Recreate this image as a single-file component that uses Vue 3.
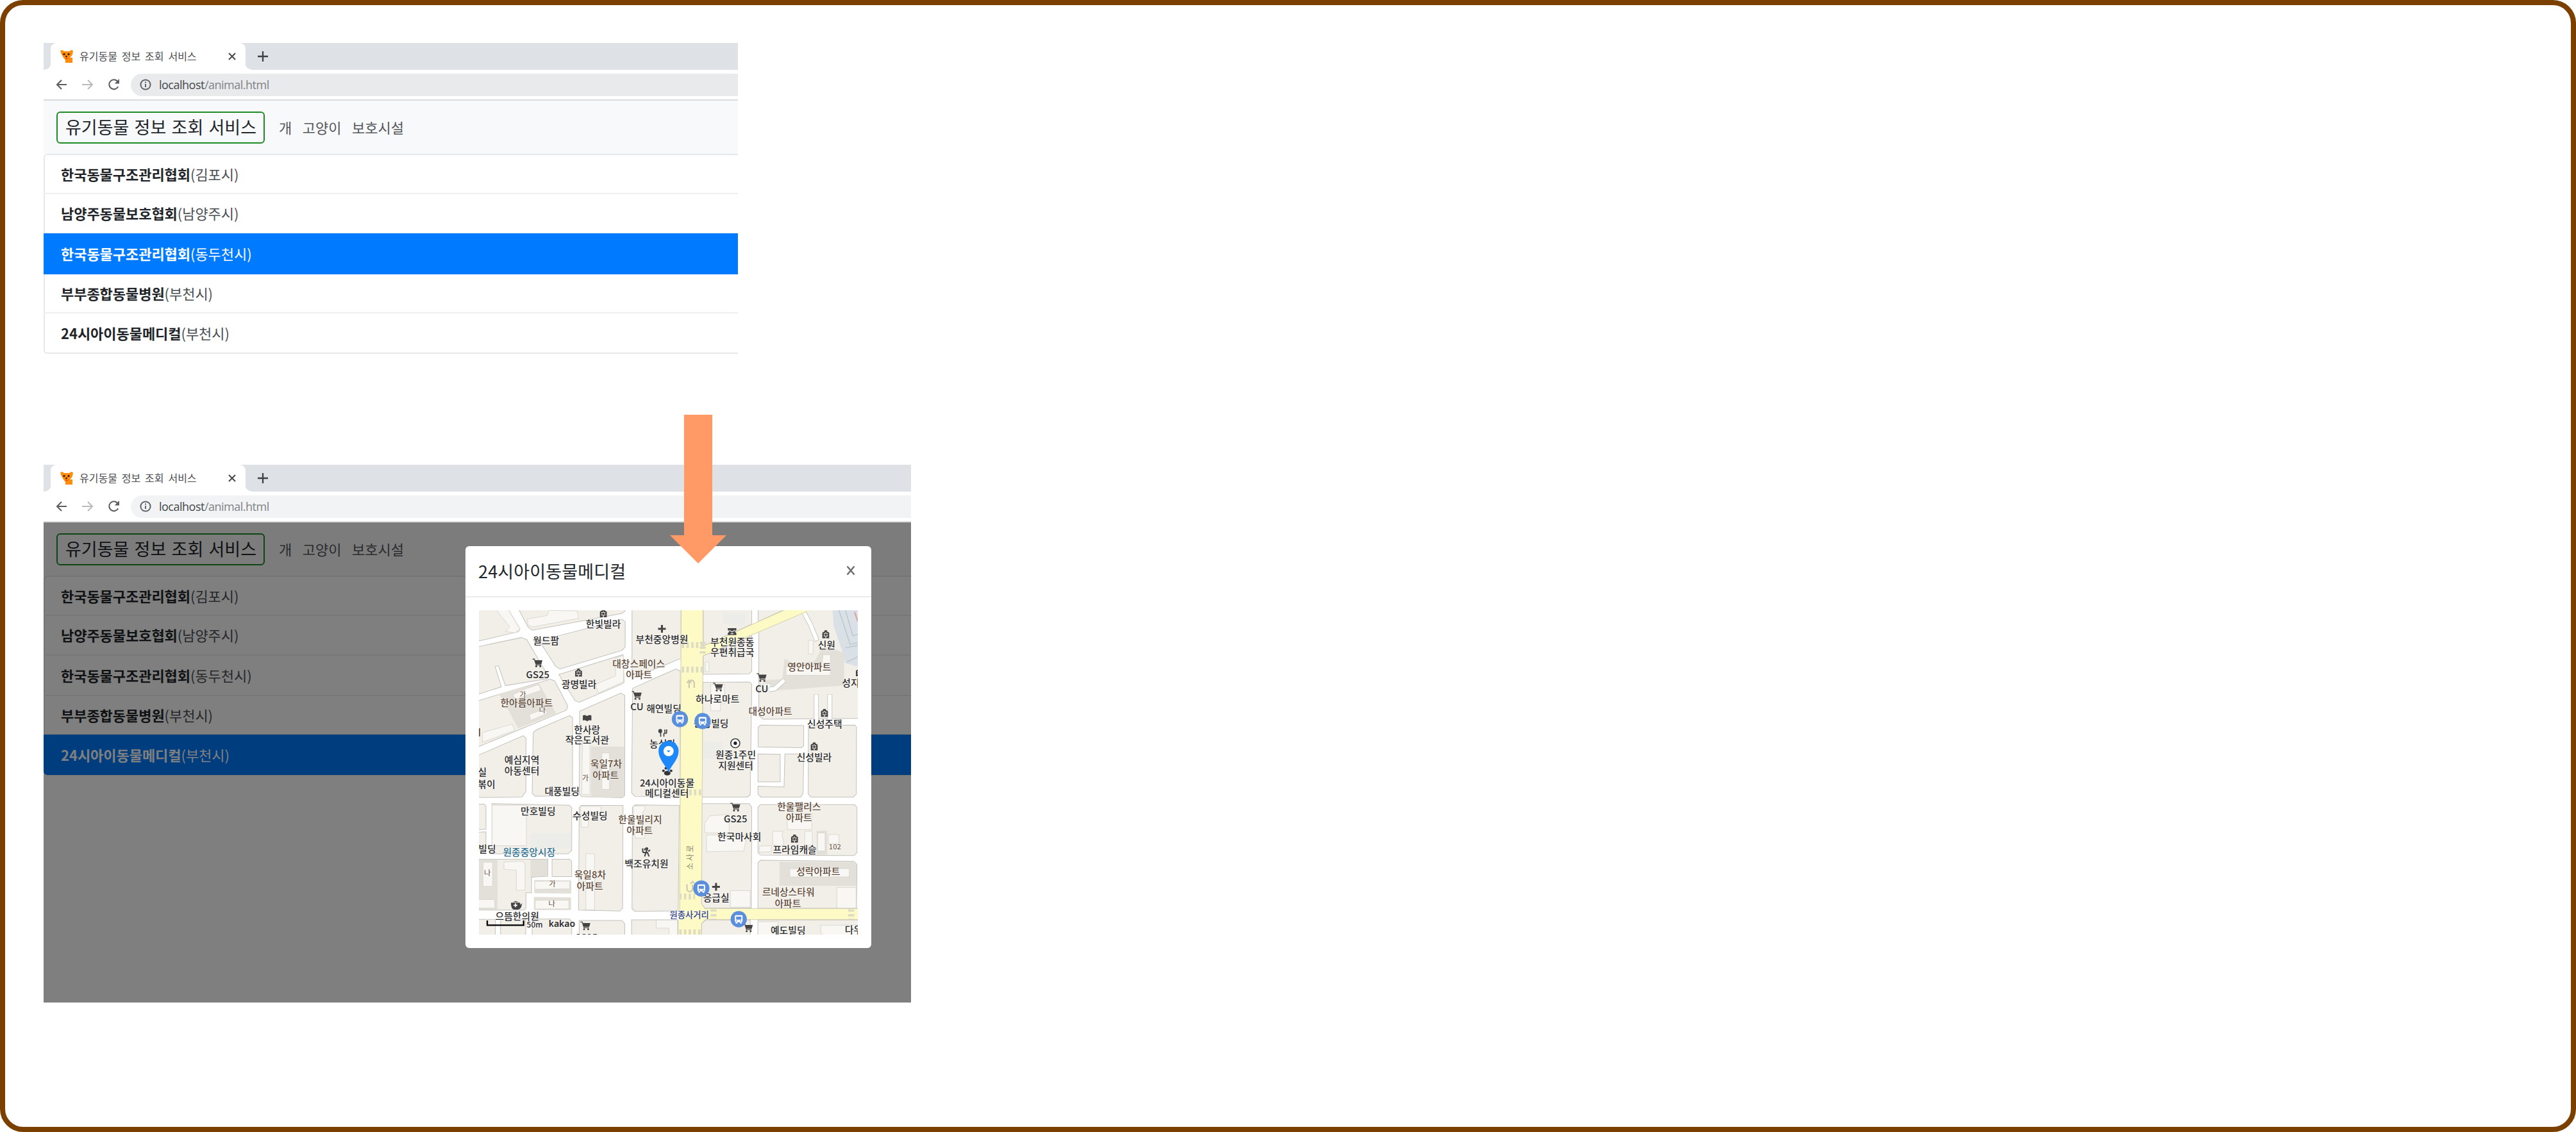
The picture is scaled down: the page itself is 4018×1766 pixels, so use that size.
<script setup>
const shelters = [
  { name: '한국동물구조관리협회', city: '김포시' },
  { name: '남양주동물보호협회', city: '남양주시' },
  { name: '한국동물구조관리협회', city: '동두천시' },
  { name: '부부종합동물병원', city: '부천시' },
  { name: '24시아이동물메디컬', city: '부천시' },
]
const shots = [
  { id: 'list', active: 2, modal: false },
  { id: 'detail', active: 4, modal: true },
]

// City blocks between the roads
const blocks = [
  '0,20 150,20 213,125 205,138 0,186',
  '200,20 710,20 705,40 690,52 270,131 250,115',
  '303,180 690,80 705,90 705,208 690,225 400,312 380,300',
  '0,211 220,165 245,175 345,345 340,358 145,390 112,297 97,300 126,396 0,436',
  '395,338 695,245 700,375 685,385 490,468 470,460',
  '0,466 355,360 375,368 437,485 430,505 0,684',
  '0,724 228,625 241,635 241,885 222,912 0,914',
  '275,610 290,597 445,530 459,540 459,905 285,908 270,895',
  '492,510 685,425 703,435 703,905 690,915 500,910 490,895',
  '737,20 966,20 966,262 900,290 737,355',
  '740,402 925,320 942,312 963,322 960,911 750,908 735,892',
  '1070,20 1297,20 1297,102 1070,205',
  '1327,20 1478,20 1327,90',
  '1070,250 1297,157 1297,322 1285,335 1070,337',
  '1330,135 1562,30 1820,20 1820,543 1350,547 1330,530',
  '1068,375 1285,373 1297,383 1290,900 1278,912 1062,912',
  '1338,575 1540,577 1540,672 1530,681 1327,677 1327,585',
  '1326,710 1430,712 1430,841 1326,841',
  '1452,710 1540,710 1537,895 1525,912 1340,912 1326,898 1326,861 1448,865',
  '1562,577 1780,575 1787,585 1786,898 1772,912 1575,912 1561,898',
  '0,945 46,945 54,955 54,1063 0,1065',
  '0,1077 54,1075 54,1160 0,1160',
  '82,943 445,950 455,962 455,1162 438,1178 82,1178',
  '0,1203 343,1203 343,1283 267,1287 267,1360 241,1360 241,1430 232,1441 0,1441',
  '363,1203 445,1203 455,1213 455,1284 363,1284',
  '500,951 695,951 693,1433 680,1446 487,1441 490,960',
  '750,949 958,951 953,1445 750,1447 737,1435 739,960',
  '1062,943 1285,943 1297,960 1295,1432 1078,1432 1062,1412',
  '1338,947 1778,947 1789,960 1789,1172 1775,1186 1338,1184 1326,1172 1326,960',
  '1338,1208 1775,1213 1789,1228 1787,1433 1326,1432 1326,1220',
  '0,1485 98,1485 98,1570 0,1570',
  '122,1487 240,1485 240,1570 122,1570',
  '270,1483 445,1483 455,1495 455,1570 270,1570',
  '490,1490 690,1490 703,1505 703,1570 490,1570',
  '735,1487 952,1487 952,1570 735,1570',
  '1062,1570 1062,1505 1082,1487 1290,1487 1290,1570',
  '1326,1487 1820,1487 1820,1570 1326,1570',
]
// Apartment grounds, drawn darker than the blocks
const grounds = [
  '115,428 300,378 382,520 205,590',
  '545,676 702,676 702,905 690,914 545,912',
  '0,1204 108,1204 108,1440 0,1440',
  '262,1204 342,1204 342,1282 262,1286',
  '280,1300 453,1302 453,1364 280,1362',
  '278,1380 452,1382 452,1441 278,1441',
  '1450,265 1500,290 1592,275 1625,212 1700,225 1730,240 1728,390 1415,412 1345,365 1440,360',
  '1427,1215 1772,1215 1787,1230 1787,1328 1427,1328',
  '1600,1070 1650,1070 1650,1182 1600,1182',
]
const buildings = [
  '90,20 150,20 213,125 190,143 145,137 165,115',
  '248,78 340,62 350,38 480,40 487,75 272,115 250,105',
  '660,262 697,250 697,372 580,425 565,385 660,345',
  '240,405 300,385 312,412 190,455 180,432',
  '258,525 325,500 342,520 262,553',
  '38,610 178,570 188,600 38,655',
  '505,650 540,650 540,900 502,900',
  '596,705 632,705 632,876 596,876',
  '82,950 243,950 243,1140 82,1140',
  '40,1217 85,1217 85,1330 40,1330',
  '0,1392 95,1392 95,1432 0,1432',
  '138,1215 225,1213 237,1225 237,1348 196,1348 196,1255 138,1250',
  '282,1306 446,1306 446,1342 282,1344',
  '284,1395 442,1395 442,1436 284,1436',
  '497,955 592,955 592,980 533,1025 533,1053 499,1053',
  '521,1177 562,1177 562,1440 521,1440',
  '742,955 797,952 797,975 787,980 787,1050 797,1060 797,1104 752,1104',
  '1080,280 1097,280 1097,325 1080,325',
  '1105,385 1170,385 1170,475 1150,475 1150,508 1105,508',
  '1562,178 1584,178 1584,242 1562,242',
  '1457,300 1625,295 1630,245 1665,245 1665,342 1457,342',
  '1330,385 1385,380 1385,400 1350,410',
  '1085,1090 1275,1090 1260,1165 1085,1168',
  '1077,1080 1077,1035 1100,1000 1190,993 1192,1080',
  '1463,990 1578,990 1578,1064 1463,1064',
  '1395,1072 1447,1072 1438,1085 1447,1130 1430,1145 1395,1135',
  '1332,1142 1388,1140 1388,1168 1332,1170',
  '1545,1072 1580,1072 1580,1140 1545,1135',
  '1605,1080 1640,1080 1640,1165 1605,1165',
  '1655,1087 1705,1087 1705,1130 1655,1130',
  '1475,1247 1753,1247 1753,1286 1475,1286',
  '1695,1335 1785,1335 1785,1432 1695,1432',
  '1197,1350 1290,1350 1290,1428 1197,1428',
  '1326,1497 1420,1495 1420,1570 1326,1570',
  '1620,1512 1790,1512 1790,1570 1650,1570 1620,1550',
  '850,1488 950,1488 950,1570 910,1570 910,1526 850,1526',
]

const labels = [
  ['한빛빌라', 603, 102], ['월드팜', 335, 180], ['GS25', 296, 340], ['광명빌라', 489, 384],
  ['대창스페이스', 768, 288, 'apt'], ['아파트', 770, 340, 'apt'],
  ['가', 226, 432, 'apt small'], ['나', 318, 504, 'apt small'], ['한아름아파트', 244, 472, 'apt'],
  ['CU', 760, 490], ['해연빌딩', 886, 498], ['부천중앙병원', 877, 175],
  ['한사랑', 527, 597], ['작은도서관', 527, 647], ['농심가', 880, 665],
  ['예심지역', 222, 740], ['아동센터', 222, 790], ['실', 37, 797], ['볶이', 57, 852],
  ['욱일7차', 616, 757, 'apt'], ['아파트', 614, 810, 'apt'], ['가', 519, 823, 'apt small'],
  ['대풍빌딩', 410, 887], ['만호빌딩', 298, 980], ['수성빌딩', 541, 1000],
  ['한울빌리지', 775, 1018, 'apt'], ['아파트', 773, 1070, 'apt'],
  ['24시아이동물', 901, 847], ['메디컬센터', 900, 895], ['빌딩', 60, 1156],
  ['원종중앙시장', 256, 1170, 'market'],
  ['나', 61, 1268, 'apt small'], ['가', 364, 1318, 'apt small'], ['나', 362, 1411, 'apt small'],
  ['욱일8차', 541, 1277, 'apt'], ['아파트', 540, 1330, 'apt'], ['백조유치원', 805, 1225],
  ['으뜸한의원', 200, 1472], ['GS25', 522, 1570],
  ['부천원종동', 1206, 187], ['우편취급국', 1206, 236], ['신원', 1647, 203],
  ['영안아파트', 1566, 304, 'apt'], ['성지', 1760, 380], ['CU', 1344, 407],
  ['하나로마트', 1137, 453], ['대성아파트', 1384, 512, 'apt'], ['원종빌딩', 1107, 568],
  ['신성주택', 1638, 570], ['원종1주민', 1222, 714], ['지원센터', 1222, 765], ['신성빌라', 1589, 728],
  ['GS25', 1221, 1014], ['한국마사회', 1239, 1098],
  ['한울팰리스', 1518, 957, 'apt'], ['아파트', 1518, 1009, 'apt'], ['프라임캐슬', 1498, 1160],
  ['102', 1686, 1146, 'apt small'], ['성락아파트', 1608, 1262, 'apt'],
  ['르네상스타워', 1468, 1357, 'apt'], ['아파트', 1466, 1410, 'apt'], ['응급실', 1131, 1384],
  ['원종사거리', 1005, 1461, 'cross'], ['예도빌딩', 1467, 1538], ['다우', 1773, 1535],
]
const carts = [[296, 285], [760, 437], [1344, 353], [1140, 398], [1221, 960], [520, 1516], [1280, 1525]]
const houses = [[603, 52], [487, 330], [1643, 150], [1637, 518], [1589, 675], [1497, 1107], [1800, 328]]
const buses = [[961, 547], [1067, 556], [1061, 1340], [1236, 1484]]
const crosses = [[877, 124], [1130, 1332]]
const crosswalks = [
  'M970 200h96', 'M970 315h96', 'M1005 890h56', 'M958 1378h74', 'M958 1546h104',
]
</script>

<template>
  <main class="frame">
    <section v-for="shot in shots" :key="shot.id" class="browser" :class="shot.id">
      <div class="tabs">
        <div class="tab">
          <svg class="favicon" viewBox="0 0 20 20">
            <path d="M0 1l3-1 3 2h8l3-2 3 1-1 6-2 3-2 2h4v8H8v-4l-3-4-3-5z" fill="#ff8c0a" />
            <circle cx="6" cy="6.500" r="1.600" fill="#2c1408" /><circle cx="13" cy="6.500" r="1.600" fill="#2c1408" />
            <path d="M7.500 9h4l-2 3z" fill="#3a1c08" />
            <path d="M7 12l3 2.500 4-2.500-3 1z" fill="#e2401b" />
          </svg>
          <span class="tab-title">유기동물 정보 조회 서비스</span>
          <svg class="tab-close" viewBox="0 0 12 12"><path d="M1 1l10 10M11 1L1 11" /></svg>
        </div>
        <svg class="tab-new" viewBox="0 0 16 16"><path d="M8 0v16M0 8h16" /></svg>
      </div>
      <div class="toolbar">
        <svg class="tool" viewBox="0 0 18 16"><path d="M17 8H2M9 1L2 8l7 7" /></svg>
        <svg class="tool faded" viewBox="0 0 18 16"><path d="M0 8h16M9 1l7 7-7 7" /></svg>
        <svg class="tool reload" viewBox="0 0 20 18">
          <path d="M16.2 12.2A7.4 7.4 0 1 1 15.4 4" />
          <path d="M18 0v7.400h-7.200z" class="solid" />
        </svg>
        <div class="address">
          <svg class="info" viewBox="0 0 18 18">
            <circle cx="9" cy="9" r="7.6" /><path d="M9 8v5M9 4.6v2" />
          </svg>
          <span class="url">localhost<i>/animal.html</i></span>
        </div>
      </div>
      <div class="page">
        <nav class="navbar">
          <a class="brand">유기동물 정보 조회 서비스</a>
          <a class="link">개</a>
          <a class="link">고양이</a>
          <a class="link">보호시설</a>
        </nav>
        <ul>
          <li v-for="(s, i) in shelters" :key="i" :class="{ active: i === shot.active }">
            <b>{{ s.name }}</b>({{ s.city }})
          </li>
        </ul>
        <div v-if="shot.modal" class="backdrop"></div>
        <div v-if="shot.modal" class="modal">
          <header>
            <h5>24시아이동물메디컬</h5>
            <svg viewBox="0 0 14 14"><path d="M1.500 0.500l11 13M12.500 0.500l-11 13" /></svg>
          </header>
          <svg class="map" viewBox="21 37 1772 1519" preserveAspectRatio="none">
            <defs>
              <g id="cart">
                <path d="M-24-19h8l9 27h23" fill="none" stroke="#444" stroke-width="4" />
                <path d="M-15-14h37l-5 18H-9z" fill="#444" />
                <circle cx="-7" cy="15" r="4.500" fill="#444" /><circle cx="12" cy="15" r="4.500" fill="#444" />
              </g>
              <g id="house">
                <path d="M-16 18V-8L-6-14V-19H6v5l10 6v26z" fill="#444" />
                <path d="M-9-6h5v6h-5zM4-6h5v6H4zM-9 4h5v6h-5zM4 4h5v6H4zM-2-10h4v7h-4zM-2 6h4v12h-4z" fill="#f2efe9" />
              </g>
              <g id="bus">
                <circle r="38" fill="#5b8fdc" />
                <rect x="-18" y="-19" width="36" height="33" rx="5" fill="#fff" />
                <path d="M-12-12h24V2h-24zM-12 6h5v4h-5zM7 6h5v4H7z" fill="#5b8fdc" />
                <path d="M-14 14h8v6h-8zM6 14h8v6H6z" fill="#fff" />
              </g>
            </defs>
            <rect x="0" y="0" width="1820" height="1600" fill="#fff" />
            <g fill="#f2efe9" stroke="#c3c1bd" stroke-width="3">
              <polygon v-for="(p, i) in blocks" :key="i" :points="p" />
            </g>
            <polygon points="1675,37 1793,37 1793,302 1735,285 1715,215 1680,110" fill="#dae1e6" />
            <path d="M1705 37l52 160 36-8M1735 212l58-10M1742 280l51-25M1735 37l35 120 23-8" fill="none" stroke="#b9c4cc" stroke-width="4" />
            <path d="M1778 45l15 45" stroke="#dba8a4" stroke-width="7" />
            <path d="M265 1082h188v70H265zM1165 50h100v60l-100-10zM1070 655h90v75h-90z" fill="#ecece8" />
            <g fill="#e3e0d9"><polygon v-for="(p, i) in grounds" :key="i" :points="p" /></g>
            <g fill="#f8f7f3" stroke="#d6d3cd" stroke-width="2.500">
              <polygon v-for="(p, i) in buildings" :key="i" :points="p" />
            </g>
            <g fill="none" stroke-linejoin="round">
              <path d="M1540 45L1572 105 1602 180M1378 408l26-3 46-42M1599 430V550M1662 430V550" stroke="#c3c1bd" stroke-width="23" />
              <path d="M1536 38L1572 105 1601 178M1378 408l26-3 45-41M1599 432V552M1662 432V552" stroke="#fff" stroke-width="18" />
            </g>
            <g fill="#fdfac6">
              <polygon points="966,30 1068,30 1062,1412 1078,1435 1800,1435 1800,1485 1080,1485 1062,1505 1060,1560 955,1560" />
              <polygon points="1060,210 1460,30 1560,30 1560,43 1060,254" />
            </g>
            <path d="M1070 205L1460 32M1070 250L1556 42M967 37L960 1440M1069 37V205M1069 250L1062 1412 1078 1434H1793M953 1487V1560M1062 1560V1503L1080 1486H1793" fill="none" stroke="#c9c5ae" stroke-width="2.500" />
            <g fill="none" stroke="#dedbc4" stroke-width="28" stroke-dasharray="11 11">
              <path v-for="d in crosswalks" :key="d" :d="d" />
              <path d="M1118 1438v46M1762 1438v46M1068 185v65" />
            </g>
            <g fill="none" stroke="#cfccb2" stroke-width="7">
              <path d="M1004 402v-22c0-20 24-20 24 0v20M994 378l10-12 10 12" />
              <path d="M994 1320v20c0 20 26 20 26 0v-18M1030 1318l-10-10-10 10" />
            </g>
            <path d="M24 590v38" stroke="#74604d" stroke-width="6" />

            <use v-for="(c, i) in carts" :key="'c' + i" href="#cart" :x="c[0]" :y="c[1]" />
            <use v-for="(c, i) in houses" :key="'h' + i" href="#house" :x="c[0]" :y="c[1]" />
            <path v-for="(c, i) in crosses" :key="'x' + i" :d="`M${c[0] - 18} ${c[1]}h36M${c[0]} ${c[1] - 18}v36`" stroke="#444" stroke-width="9" />
            <path d="M507 530q12-5 20 3 8-8 20-3v23q-12-4-20 4-8-8-20-4z" fill="#444" />
            <path d="M871 595v34M891 595v12q0 8-5 8v14M899 595v12q0 8-6 8" fill="none" stroke="#444" stroke-width="5" />
            <ellipse cx="869" cy="603" rx="9" ry="10" fill="#444" />
            <path d="M1185 121h40v8l-8 7 8 8v9h-40v-9l8-8-8-7z" fill="#444" />
            <path d="M1192 130l13 9 13-9M1198 147h14" fill="none" stroke="#eee" stroke-width="4" />
            <circle cx="1220" cy="660" r="21" fill="#fff" stroke="#444" stroke-width="5" />
            <circle cx="1220" cy="660" r="8" fill="#222" />
            <path d="M787 1152v12q0 8 8 8h14l8 18M797 1152v10M808 1156l-6 16-6 18M812 1166l10-6" fill="none" stroke="#444" stroke-width="6" />
            <circle cx="806" cy="1154" r="7" fill="#444" />
            <path d="M171 1407h42l3 10 8-8-6 20q-6 10-14 10h-20q-14-4-13-32zM180 1404q14-10 26 0z" fill="#444" />
            <path d="M192 1410v18M183 1419h18" stroke="#fff" stroke-width="5" />

            <g class="labels">
              <text v-for="(l, i) in labels" :key="i" :x="l[1]" :y="l[2] + (l[3] && l[3].includes('small') ? 12 : 15.500)" :class="l[3]">{{ l[0] }}</text>
              <text class="road" transform="translate(1023 1195) rotate(-90)">소 사 로</text>
              <text x="282" y="1523" class="scale">50m</text>
              <text x="409" y="1519" class="kakao">kakao</text>
            </g>
            <path d="M60 1490v22h170v-22" fill="none" stroke="#000" stroke-width="7" />

            <use v-for="(c, i) in buses" :key="'b' + i" href="#bus" :x="c[0]" :y="c[1]" />
            <g fill="#333">
              <ellipse cx="902" cy="800" rx="15" ry="11" />
              <circle cx="884" cy="789" r="6" /><circle cx="895" cy="777" r="6" />
              <circle cx="909" cy="777" r="6" /><circle cx="920" cy="789" r="6" />
            </g>
            <path d="M908 798C900 768 861 738 861 696a47 47 0 0 1 94 0C955 738 916 768 908 798z" fill="#1e88fb" />
            <circle cx="908" cy="697" r="24" fill="#fff" />
            <path d="M899 694h18l-9 9z" fill="#1e88fb" />
          </svg>
        </div>
      </div>
    </section>
    <svg class="arrow" viewBox="0 0 88 232"><path d="M22 0h44v188h22L44 232 0 188h22z" /></svg>
  </main>
</template>

<style>
body {
  background: #fff;
}
</style>

<style scoped>
* {
  box-sizing: border-box;
}
.frame {
  position: relative;
  width: 4018px;
  height: 1766px;
  border: 8px solid #7b3f00;
  border-radius: 36px;
  padding: 59px 60px;
  background: #fff;
  display: flex;
  flex-direction: column;
  align-items: flex-start;
  gap: 173px;
  font-family: "Noto Sans CJK KR", sans-serif;
  color: #212529;
}
.browser {
  display: flex;
  flex-direction: column;
}
.list {
  width: 1083px;
  height: 485px;
}
.detail {
  width: 1353px;
  height: 839px;
}
svg {
  flex: none;
  fill: none;
}
.tabs {
  flex: none;
  height: 42px;
  background: #dee1e6;
  display: flex;
  align-items: center;
  padding-left: 11px;
}
.tab {
  position: relative;
  width: 304px;
  height: 42px;
  background: #fff;
  border-radius: 9px 9px 0 0;
  display: flex;
  align-items: center;
  padding-left: 15px;
}
.tab::before,
.tab::after {
  content: "";
  position: absolute;
  bottom: 0;
  width: 9px;
  height: 10px;
}
.tab::before {
  left: -9px;
  background: radial-gradient(circle at 0 0, transparent 9px, #fff 9.5px);
}
.tab::after {
  right: -9px;
  background: radial-gradient(circle at 100% 0, transparent 9px, #fff 9.5px);
}
.favicon {
  width: 20px;
  height: 20px;
}
.tab-title {
  width: 232px;
  margin: -2px 0 0 10px;
  font-size: 16px;
  line-height: 24px;
  word-spacing: 3.3px;
  white-space: nowrap;
  color: #4a4c50;
}
.tab-close {
  width: 12px;
  height: 12px;
  stroke: #44474b;
  stroke-width: 2;
}
.tab-new {
  width: 16px;
  height: 16px;
  margin-left: 19px;
  stroke: #3c4043;
  stroke-width: 2.3;
}
.toolbar {
  flex: none;
  height: 48px;
  border-bottom: 2px solid #dadbdc;
  display: flex;
  align-items: center;
  padding-left: 19px;
}
.tool {
  width: 18px;
  height: 16px;
  margin-right: 23px;
  stroke: #5a5d61;
  stroke-width: 2.1;
}
.faded {
  stroke: #b9bbbe;
}
.reload {
  width: 20px;
  height: 18px;
  margin: 0 16px 0 -1px;
}
.solid {
  fill: #5a5d61;
  stroke: none;
}
.address {
  flex: 1;
  height: 35px;
  border-radius: 18px 0 0 18px;
  background: #e9eaec;
  display: flex;
  align-items: center;
  padding-left: 14px;
}
.detail .address {
  background: #f1f3f4;
}
.info {
  width: 18px;
  height: 18px;
  stroke: #5f6368;
  stroke-width: 2;
}
.url {
  margin-left: 12px;
  font: 18px/28px "Open Sans", sans-serif;
  letter-spacing: -0.5px;
  color: #44474b;
}
.url i {
  font-style: normal;
  color: #808387;
}
.page {
  position: relative;
  flex: 1;
  display: flex;
  flex-direction: column;
}
.navbar {
  flex: none;
  height: 83px;
  background: #f8f9fb;
  display: flex;
  align-items: center;
  padding-left: 20px;
}
.brand {
  width: 325px;
  height: 50px;
  border: 2px solid #1d8a24;
  border-radius: 6px;
  padding-left: 12px;
  font-size: 27px;
  line-height: 44px;
  word-spacing: 2.2px;
  white-space: nowrap;
  margin-right: 22px;
}
.link {
  font-size: 22px;
  line-height: 32px;
  margin: -2px 16.5px 0 0;
  color: #55585c;
}
ul {
  list-style: none;
  margin: 0;
  padding: 0;
  border: 2px solid #e7e8e9;
  border-right: 0;
  border-radius: 6px 0 0 6px;
}
li {
  height: 61px;
  margin-left: -2px;
  padding-left: 27px;
  font-size: 22px;
  line-height: 58px;
  letter-spacing: -0.04px;
  border-bottom: 2px solid #eeefef;
  color: #4b4f53;
}
li:nth-child(2) {
  height: 62px;
}
li:last-child {
  border-bottom: 0;
  line-height: 60px;
}
li b {
  color: #212529;
}
li.active {
  background: #007bff;
  margin-top: -1px;
  height: 64px;
  line-height: 62px;
  border-bottom: 0;
}
li.active,
li.active b {
  color: #fff;
}
.list li:nth-child(4),
.detail li:nth-child(4) {
  height: 61px;
}
.detail li:nth-child(3) {
  height: 63px;
  line-height: 60px;
}
.detail li.active {
  height: 63px;
  line-height: 62px;
  border-radius: 0 0 0 6px;
  margin-bottom: -1px;
}
.backdrop {
  position: absolute;
  inset: 0;
  background: rgba(0, 0, 0, 0.5);
}
.modal {
  position: absolute;
  left: 658px;
  top: 37px;
  width: 633px;
  height: 627px;
  background: #fff;
  border-radius: 6px;
}
.modal header {
  height: 80px;
  border-bottom: 2px solid #ebecee;
  display: flex;
  align-items: center;
  justify-content: space-between;
  padding: 0 25px 0 20px;
}
h5 {
  margin: 0;
  font-size: 27px;
  font-weight: 400;
  line-height: 40px;
  letter-spacing: 0.15px;
}
header svg {
  width: 14px;
  height: 14px;
  margin-bottom: 2px;
  stroke: #6d6d6d;
  stroke-width: 2.4;
}
.map {
  display: block;
  width: 591px;
  height: 506px;
  margin: 20px 0 0 21px;
}
.labels text {
  font-size: 44.5px;
  font-weight: 500;
  text-anchor: middle;
  fill: #2a2a2c;
  stroke: #fff;
  stroke-width: 4px;
  stroke-opacity: 0.7;
  paint-order: stroke;
}
.labels .apt {
  fill: #5f4a39;
}
.labels .small {
  font-size: 34px;
  font-weight: 400;
}
.labels .market {
  fill: #2c6f90;
}
.labels .cross {
  fill: #303f86;
  font-size: 40px;
}
.labels .road {
  fill: #8d8a74;
  stroke: none;
  font-size: 36px;
  font-weight: 400;
}
.labels .scale {
  font-size: 36px;
}
.labels .kakao {
  font-family: "Noto Sans", sans-serif;
  font-size: 42px;
  font-weight: 600;
}
.arrow {
  position: absolute;
  left: 1037px;
  top: 639px;
  width: 88px;
  height: 232px;
  fill: #ff9966;
}
</style>
